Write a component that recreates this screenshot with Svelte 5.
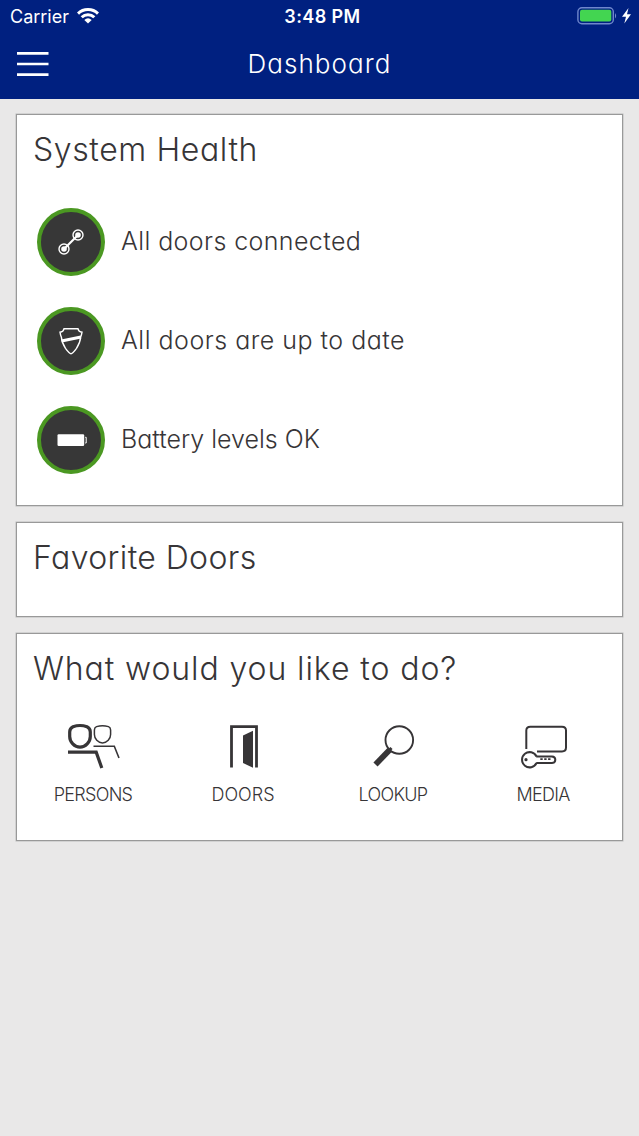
<script>
  const healthItems = [
    { icon: 'link', text: 'All doors connected' },
    { icon: 'shield', text: 'All doors are up to date' },
    { icon: 'battery', text: 'Battery levels OK' }
  ];

  const actions = [
    { icon: 'persons', label: 'PERSONS' },
    { icon: 'doors', label: 'DOORS' },
    { icon: 'lookup', label: 'LOOKUP' },
    { icon: 'media', label: 'MEDIA' }
  ];
</script>

<div class="app">
  <header>
    <div class="status-bar">
      <div class="carrier">
        <span>Carrier</span>
        <svg width="22" height="16" viewBox="0 0 22 16">
          <g fill="none" stroke="#fff" stroke-width="3">
            <path d="M1 5.6C6.4 0.2 15.6 0.2 21 5.6" />
            <path d="M4.7 9.3C8.2 5.8 13.8 5.8 17.3 9.3" />
          </g>
          <path d="M7.3 11.9Q11 8.6 14.7 11.9L11 15.5Z" fill="#fff" />
        </svg>
      </div>
      <span class="time">3:48 PM</span>
      <svg class="power" width="56" height="20" viewBox="0 0 56 20">
        <rect x="0.9" y="1.7" width="35.4" height="16" rx="4" fill="none" stroke="#6f87cc" stroke-width="1.4" />
        <rect x="3" y="3.8" width="31.3" height="11.8" rx="2" fill="#43d551" />
        <path d="M38 6.9Q40.3 9.7 38 12.4Z" fill="#6f87cc" />
        <path d="M51.5 2L45 10.7H49L47.3 17.5L54 8.3H50Z" fill="#fff" />
      </svg>
    </div>
    <div class="nav-bar">
      <button class="menu" type="button" aria-label="Menu">
        <svg width="34" height="26" viewBox="0 0 34 26">
          <path d="M1 2.4H32.5M1 13H32.5M1 23.6H32.5" stroke="#fff" stroke-width="2.6" />
        </svg>
      </button>
      <h1>Dashboard</h1>
    </div>
  </header>

  <main>
    <section class="card health">
      <h2>System Health</h2>
      <ul>
        {#each healthItems as item}
          <li>
            <span class="badge">
              <svg width="34" height="34" viewBox="0 0 34 34" fill="none" stroke="#fff">
                {#if item.icon === 'link'}
                  <circle cx="10" cy="24" r="5" stroke-width="1.4" />
                  <circle cx="24" cy="10" r="5" stroke-width="1.4" />
                  <circle cx="10" cy="24" r="2.8" fill="#fff" stroke="none" />
                  <circle cx="24" cy="10" r="2.8" fill="#fff" stroke="none" />
                  <path d="M10 24L24 10" stroke-width="2.2" />
                {:else if item.icon === 'shield'}
                  <path d="M10 4.8H24Q24.6 7.8 28 8.2Q27.6 11 26.6 13.3Q26.3 18.5 22.5 24.3Q18.6 29.7 17 29.7Q15.4 29.7 11.5 24.3Q7.7 18.5 7.4 13.3Q6.4 11 6 8.2Q9.4 7.8 10 4.8Z" stroke-width="1.4" />
                  <path d="M7.5 17L27 13" stroke-width="3" />
                {:else}
                  <rect x="3.5" y="11.3" width="26.7" height="11.7" rx="1.2" fill="#fff" stroke="none" />
                  <path d="M31.2 14.3H32.2V20H31.2" stroke-width="1" />
                {/if}
              </svg>
            </span>
            <span class="text {item.icon}">{item.text}</span>
          </li>
        {/each}
      </ul>
    </section>

    <section class="card favorites">
      <h2>Favorite Doors</h2>
    </section>

    <section class="card todo">
      <h2>What would you like to do?</h2>
      <div class="actions">
        {#each actions as action}
          <button class="action" type="button">
            <svg width="56" height="50" viewBox="0 0 56 50" fill="none" stroke="#373537">
              {#if action.icon === 'persons'}
                <path d="M8 4.7Q15 2.3 22 4.7Q25.3 6.2 25.3 10V14.5C25.3 20 20.5 25.2 15 25.2S4.7 20 4.7 14.5V10Q4.7 6.2 8 4.7Z" stroke-width="3.2" />
                <path d="M3 30.2H31.2L36.8 46" stroke-width="3.2" />
                <path d="M31.5 4.6Q37.5 3 43.5 4.6Q45.6 5.5 45.6 8V12.5C45.6 16.8 42 20.9 37.5 20.9S29.4 16.8 29.4 12.5V8Q29.4 5.5 31.5 4.6Z" stroke-width="1.5" />
                <path d="M28.5 24.3H49.3L54 36" stroke-width="1.6" />
              {:else if action.icon === 'doors'}
                <path d="M16.5 45.5V4.7H41.5V45.5" stroke-width="2.8" />
                <path d="M28 13.5L38 8.7V45.7L28 41Z" fill="#373537" stroke="none" />
              {:else if action.icon === 'lookup'}
                <circle cx="34.3" cy="18" r="13.8" stroke-width="1.9" />
                <path d="M24.5 28L10.5 42.5" stroke-width="5.8" />
                <path d="M26.5 26L23 29.5" stroke-width="3" />
              {:else}
                <path d="M11.3 27V8.5Q11.3 4.7 15.3 4.7H47Q51 4.7 51 8.5V25.5Q51 29.4 47 29.4H22" stroke-width="2" />
                <path d="M21.2 34.4H37Q40.3 34.6 40.3 37.7Q40.3 40.8 37 41H21.2" stroke-width="2" />
                <path d="M21.5 34.5A7.6 7.6 0 1 0 21.5 41" stroke-width="2" />
                <circle cx="11" cy="37.7" r="1.6" fill="#373537" stroke="none" />
                <path d="M25.3 37.2H35.5" stroke-width="1.7" stroke-dasharray="2.4 1.5" />
              {/if}
            </svg>
            <span class={action.icon}>{action.label}</span>
          </button>
        {/each}
      </div>
    </section>
  </main>
</div>

<style>
  :global(body) {
    background: #e9e8e8;
  }

  .app {
    min-height: 1136px;
    font-family: Inter, "Open Sans", sans-serif;
    font-weight: 300;
    color: #373537;
    background: #e9e8e8;
  }

  header {
    height: 99px;
    background: #002080;
    color: #fff;
  }

  .status-bar {
    display: grid;
    grid-template-columns: 1fr auto 1fr;
    align-items: center;
    height: 32px;
    padding: 0 6px 0 10px;
    font-size: 18px;
  }

  .carrier {
    display: flex;
    align-items: center;
    gap: 8px;
    font-weight: 400;
  }

  .time {
    font-weight: 600;
    letter-spacing: 0.4px;
    padding-left: 2px;
  }

  .power {
    justify-self: end;
  }

  .nav-bar {
    display: grid;
    grid-template-columns: 34px 1fr 34px;
    align-items: center;
    height: 64px;
    padding: 0 16px;
  }

  .menu {
    display: flex;
    padding: 0;
    border: none;
    background: none;
  }

  h1,
  h2,
  .text {
    font-feature-settings: "cv11";
  }

  h1 {
    margin: 0 0 2px;
    font-size: 26px;
    font-weight: 300;
    letter-spacing: 1.05px;
    text-align: center;
  }

  main {
    display: flex;
    flex-direction: column;
    gap: 16px;
    padding: 15px 16px;
  }

  .card {
    box-sizing: border-box;
    padding: 15px 16px 0;
    border: 1px solid #999;
    box-shadow: 0 0 0 0.5px #bbb;
    background: #fff;
  }

  .health {
    height: 392px;
  }

  .favorites {
    height: 95px;
  }

  .todo {
    height: 208px;
  }

  h2 {
    margin: 0;
    font-size: 32px;
    line-height: 40px;
    font-weight: 300;
    letter-spacing: 0.6px;
    white-space: nowrap;
  }

  .favorites h2 {
    letter-spacing: 0.4px;
  }

  .todo h2 {
    letter-spacing: 0.9px;
  }

  ul {
    display: flex;
    flex-direction: column;
    gap: 31px;
    margin: 0;
    padding: 38px 4px 0;
    list-style: none;
  }

  li {
    display: flex;
    align-items: center;
    gap: 16px;
    font-size: 25px;
  }

  .text {
    margin-bottom: 2px;
  }

  .link {
    letter-spacing: 0.4px;
  }

  .shield {
    letter-spacing: 0.5px;
  }

  .badge {
    display: flex;
    align-items: center;
    justify-content: center;
    box-sizing: border-box;
    width: 68px;
    height: 68px;
    border: 4px solid #4b9822;
    border-radius: 50%;
    background: #373737;
  }

  .actions {
    display: grid;
    grid-template-columns: repeat(4, 150px);
    margin: 33px -15px 0;
  }

  .action {
    display: flex;
    flex-direction: column;
    align-items: center;
    gap: 12px;
    padding: 0;
    border: none;
    background: none;
    color: inherit;
    font: inherit;
    font-size: 18px;
    line-height: 22px;
    letter-spacing: -0.7px;
  }

  .doors {
    letter-spacing: 0;
  }
</style>
